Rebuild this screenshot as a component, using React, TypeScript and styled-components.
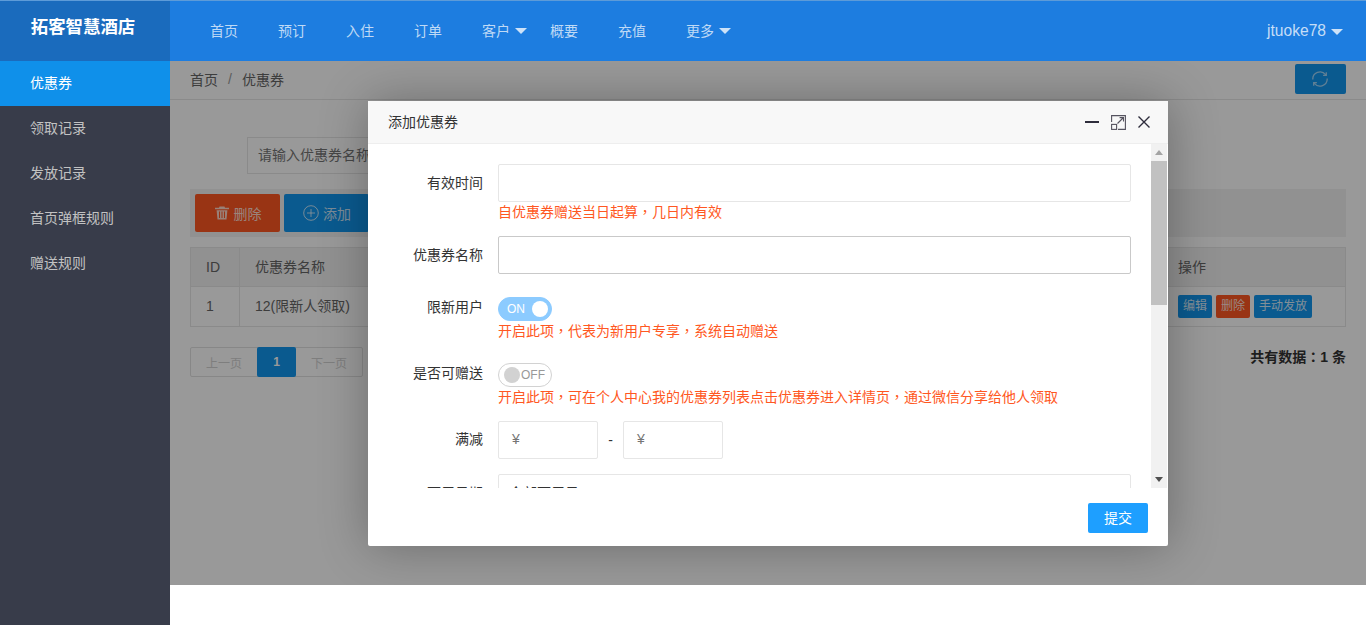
import React from "react";
import styled, { createGlobalStyle } from "styled-components";

const FONT = `"Liberation Sans", "Noto Sans CJK SC", sans-serif`;

const Global = createGlobalStyle`
  html, body { margin: 0; padding: 0; background: #fff; }
  body { font-family: ${FONT}; font-size: 14px; color: #333; overflow: hidden; }
  * { box-sizing: border-box; }
`;

const Shell = styled.div`
  display: grid;
  grid-template-columns: 170px 1fr;
  grid-template-rows: 61px 1fr;
  width: 1366px;
  height: 625px;
  overflow: hidden;
`;

const Logo = styled.div`
  background: #1a6bbd;
  border-top: 1px solid #5d9bd8;
  color: #fff;
  font-size: 17.4px;
  font-weight: 700;
  display: flex;
  align-items: center;
  justify-content: center;
  padding: 0 4px 11px 0;
`;

const TopNav = styled.nav`
  background: #1d7de0;
  border-top: 1px solid #5d9bd8;
  display: flex;
  align-items: center;
  padding: 0 23px 2px 20px;
`;

const NavItem = styled.a`
  color: rgba(255, 255, 255, 0.72);
  font-size: 14px;
  width: 68px;
  padding-left: 20px;
  display: flex;
  align-items: center;
  white-space: nowrap;
`;

const Caret = styled.i`
  display: inline-block;
  width: 0;
  height: 0;
  margin-left: 5px;
  margin-top: 2px;
  border-style: solid;
  border-width: 6px 6px 0;
  border-color: rgba(255, 255, 255, 0.78) transparent transparent;
`;

const User = styled.div`
  margin-left: auto;
  display: flex;
  align-items: center;
  color: rgba(255, 255, 255, 0.75);
  font-size: 15.6px;
  padding-top: 2px;
`;

const Sidebar = styled.aside`
  background: #383c4a;
`;

const SideItem = styled.div<{ $active?: boolean }>`
  height: 45px;
  line-height: 45px;
  padding-left: 30px;
  font-size: 14px;
  color: ${(p) => (p.$active ? "#fff" : "#c2c2c2")};
  background: ${(p) => (p.$active ? "#0f90ea" : "transparent")};
`;

const Main = styled.main`
  display: flex;
  flex-direction: column;
`;

const Frame = styled.div`
  position: relative;
  height: 524px;
  background: #fff;
  overflow: hidden;
`;

const Crumbs = styled.div`
  height: 39px;
  border-bottom: 1px solid #e6e6e6;
  background: #fff;
  display: flex;
  align-items: center;
  padding: 0 20px 3px;
  color: #666;
  font-size: 14px;
`;

const Slash = styled.span`
  margin: 0 10px;
  color: #999;
`;

const RefreshButton = styled.div`
  margin-left: auto;
  width: 51px;
  height: 30px;
  border-radius: 2px;
  background: #1296ee;
  display: flex;
  align-items: center;
  justify-content: center;
  padding-right: 2px;
`;

const Page = styled.div`
  display: flex;
  flex-direction: column;
  padding: 37px 20px 0;
`;

const Search = styled.div`
  margin-left: 57px;
  width: 300px;
  height: 37px;
  border: 1px solid #e6e6e6;
  line-height: 35px;
  padding-left: 10px;
  color: #757575;
  font-size: 14px;
`;

const Toolbar = styled.div`
  margin-top: 15px;
  height: 48px;
  background: #f2f2f2;
  padding: 5px;
  display: flex;
  gap: 4px;
`;

const ToolButton = styled.div<{ $color: string }>`
  width: 85px;
  height: 38px;
  border-radius: 2px;
  background: ${(p) => p.$color};
  color: rgba(255, 255, 255, 0.8);
  display: flex;
  align-items: center;
  justify-content: center;
  gap: 4px;
  font-size: 14px;
  padding-bottom: 1px;
`;

const AddButton = styled(ToolButton)`
  padding-left: 1px;
`;

const Table = styled.div`
  margin-top: 10px;
  border: 1px solid #e6e6e6;
  display: grid;
  grid-template-columns: 48px 1fr 182px;
`;

const HeadCell = styled.div`
  height: 39px;
  line-height: 39px;
  padding-left: 15px;
  background: #f2f2f2;
  border-bottom: 1px solid #e6e6e6;
  color: #666;
  & + & { border-left: 1px solid #e6e6e6; }
`;

const ActionHead = styled(HeadCell)`
  padding-left: 14px;
`;

const BodyCell = styled.div`
  height: 39px;
  line-height: 39px;
  padding-left: 15px;
  color: #666;
  display: flex;
  align-items: center;
  & + & { border-left: 1px solid #e6e6e6; }
`;

const ActionCell = styled(BodyCell)`
  gap: 4px;
  padding-left: 14px;
`;

const MiniButton = styled.span<{ $color: string }>`
  height: 23px;
  padding: 0 5px;
  line-height: 23px;
  border-radius: 2px;
  font-size: 12px;
  background: ${(p) => p.$color};
  color: rgba(255, 255, 255, 0.85);
`;

const Footer = styled.div`
  margin-top: 20px;
  display: flex;
  justify-content: space-between;
  align-items: flex-start;
`;

const Pager = styled.div`
  display: flex;
  width: 173px;
  height: 30px;
  border: 1px solid #e2e2e2;
  border-radius: 2px;
  font-size: 12px;
  color: #d2d2d2;
`;

const PagerItem = styled.span<{ $current?: boolean }>`
  display: flex;
  align-items: center;
  justify-content: center;
  flex: ${(p) => (p.$current ? "0 0 39px" : "1")};
  margin: ${(p) => (p.$current ? "-1px 0" : "0")};
  background: ${(p) => (p.$current ? "#1296ee" : "transparent")};
  color: ${(p) => (p.$current ? "#fff" : "inherit")};
  font-weight: ${(p) => (p.$current ? 700 : 400)};
  border-radius: ${(p) => (p.$current ? "2px" : "0")};
`;

const Total = styled.div`
  font-weight: 700;
  font-size: 14px;
  line-height: 20px;
  height: 20px;
  color: #333;
`;

const Punct = styled.span`
  font-family: "Noto Sans CJK TC", sans-serif;
  line-height: 0;
`;

const Shade = styled.div`
  position: absolute;
  inset: 0;
  background: rgba(0, 0, 0, 0.4);
`;

const Modal = styled.section`
  position: absolute;
  left: 198px;
  top: 40px;
  width: 800px;
  height: 445px;
  background: #fff;
  border-radius: 2px;
  box-shadow: 1px 1px 50px rgba(0, 0, 0, 0.3);
  display: flex;
  flex-direction: column;
`;

const ModalTitle = styled.header`
  height: 43px;
  flex: none;
  background: #f8f8f8;
  border-bottom: 1px solid #eee;
  display: flex;
  align-items: center;
  padding: 0 16px 3px 20px;
  font-size: 14px;
  color: #333;
`;

const TitleIcons = styled.div`
  margin-left: auto;
  display: flex;
  align-items: center;
  gap: 12px;
  padding-top: 3px;
`;

const ModalBody = styled.div`
  height: 344px;
  flex: none;
  display: flex;
  padding-right: 1px;
`;

const FormArea = styled.div`
  flex: 1;
  overflow: hidden;
  padding: 20px 20px 0 0;
  display: flex;
  flex-direction: column;
`;

const Scrollbar = styled.div`
  width: 16px;
  background: #f1f1f1;
  display: flex;
  flex-direction: column;
`;

const ScrollArrow = styled.div`
  height: 17px;
  flex: none;
  display: flex;
  align-items: center;
  justify-content: center;
`;

const ScrollTrack = styled.div`
  flex: 1;
`;

const ScrollThumb = styled.div`
  height: 144px;
  background: #c1c1c1;
`;

const Field = styled.div<{ $gap?: number }>`
  display: flex;
  margin-bottom: ${(p) => p.$gap ?? 0}px;
  flex: none;
`;

const Label = styled.label<{ $top?: number }>`
  width: 115px;
  flex: none;
  text-align: right;
  color: #333;
  font-size: 14px;
  line-height: 20px;
  padding-top: ${(p) => p.$top ?? 9}px;
`;

const Control = styled.div`
  margin-left: 15px;
  flex: 1;
`;

const TextInput = styled.div<{ $focus?: boolean }>`
  height: 38px;
  border: 1px solid ${(p) => (p.$focus ? "#c9c9c9" : "#e6e6e6")};
  border-radius: 2px;
  background: #fff;
  line-height: 36px;
  padding-left: 10px;
  color: #333;
`;

const Hint = styled.div`
  color: #ff5722;
  font-size: 14px;
  line-height: 20px;
  height: 20px;
`;

const Switch = styled.div<{ $on?: boolean }>`
  width: 54px;
  height: 24px;
  border-radius: 20px;
  border: 1px solid ${(p) => (p.$on ? "#8ccbff" : "#d2d2d2")};
  background: ${(p) => (p.$on ? "#8ccbff" : "#fff")};
  color: ${(p) => (p.$on ? "#fff" : "#999")};
  font-size: 12px;
  display: flex;
  flex-direction: ${(p) => (p.$on ? "row" : "row-reverse")};
  align-items: center;
  justify-content: space-between;
  padding: ${(p) => (p.$on ? "0 3px 0 8px" : "0 6px 0 5px")};
`;

const Knob = styled.i<{ $on?: boolean }>`
  width: 16px;
  height: 16px;
  border-radius: 50%;
  background: ${(p) => (p.$on ? "#fff" : "#d2d2d2")};
`;

const Range = styled.div`
  display: flex;
  align-items: center;
`;

const Money = styled.div`
  width: 100px;
  height: 38px;
  border: 1px solid #e6e6e6;
  border-radius: 2px;
  line-height: 34px;
  padding-left: 13px;
  color: #757575;
`;

const Dash = styled.span`
  width: 25px;
  text-align: center;
`;

const ModalFooter = styled.footer`
  flex: 1;
  display: flex;
  justify-content: flex-end;
  align-items: flex-start;
  padding: 15px 20px 0 0;
`;

const Submit = styled.div`
  width: 60px;
  height: 30px;
  line-height: 30px;
  background: #1e9fff;
  color: #fff;
  text-align: center;
  border-radius: 2px;
  font-size: 14px;
`;

const Dropdown = () => <Caret />;

const App: React.FC = () => (
  <Shell>
    <Global />
    <Logo>拓客智慧酒店</Logo>
    <TopNav>
      {["首页", "预订", "入住", "订单"].map((t) => (
        <NavItem key={t}>{t}</NavItem>
      ))}
      <NavItem>
        客户
        <Dropdown />
      </NavItem>
      {["概要", "充值"].map((t) => (
        <NavItem key={t}>{t}</NavItem>
      ))}
      <NavItem>
        更多
        <Dropdown />
      </NavItem>
      <User>
        jtuoke78
        <Dropdown />
      </User>
    </TopNav>
    <Sidebar>
      <SideItem $active>优惠券</SideItem>
      <SideItem>领取记录</SideItem>
      <SideItem>发放记录</SideItem>
      <SideItem>首页弹框规则</SideItem>
      <SideItem>赠送规则</SideItem>
    </Sidebar>
    <Main>
      <Frame>
        <Crumbs>
          首页
          <Slash>/</Slash>
          优惠券
          <RefreshButton>
            <svg width="18" height="18" viewBox="0 0 18 18" fill="none" stroke="rgba(255,255,255,.6)" strokeWidth="1.3">
              <path d="M1.8 9.5A7.2 7.2 0 0 1 14.6 4.6" />
              <path d="M16.2 8.5A7.2 7.2 0 0 1 3.4 13.4" />
              <path d="M15.3 2.2v3.2h-3.2" />
              <path d="M2.7 15.8v-3.2h3.2" />
            </svg>
          </RefreshButton>
        </Crumbs>
        <Page>
          <Search>请输入优惠券名称</Search>
          <Toolbar>
            <ToolButton $color="#ff5722">
              <svg width="16" height="16" viewBox="0 0 16 16" fill="rgba(255,255,255,.75)">
                <path d="M5.5 1.5h5l.5 1.3H15v1.4H1V2.8h4zM2.6 5.2h10.8l-.9 9.3H3.5zM5 6.5v6.5h1V6.5zm2.5 0v6.5h1V6.5zm2.5 0v6.5h1V6.5z" />
              </svg>
              删除
            </ToolButton>
            <AddButton $color="#1296ee">
              <svg width="16" height="16" viewBox="0 0 16 16" fill="none" stroke="rgba(255,255,255,.75)" strokeWidth="1">
                <circle cx="8" cy="8" r="7.3" />
                <path d="M8 4v8M4 8h8" />
              </svg>
              添加
            </AddButton>
          </Toolbar>
          <Table>
            <HeadCell>ID</HeadCell>
            <HeadCell>优惠券名称</HeadCell>
            <ActionHead>操作</ActionHead>
            <BodyCell>1</BodyCell>
            <BodyCell>12(限新人领取)</BodyCell>
            <ActionCell>
              <MiniButton $color="#1296ee">编辑</MiniButton>
              <MiniButton $color="#ff5722">删除</MiniButton>
              <MiniButton $color="#1296ee">手动发放</MiniButton>
            </ActionCell>
          </Table>
          <Footer>
            <Pager>
              <PagerItem>上一页</PagerItem>
              <PagerItem $current>1</PagerItem>
              <PagerItem>下一页</PagerItem>
            </Pager>
            <Total>
              共有数据<Punct>：</Punct>1 条
            </Total>
          </Footer>
        </Page>
        <Shade />
        <Modal>
          <ModalTitle>
            添加优惠券
            <TitleIcons>
              <svg width="14" height="4" viewBox="0 0 14 4">
                <rect x="0" y="1" width="14" height="2" fill="#2e2d3c" />
              </svg>
              <svg width="15" height="15" viewBox="0 0 15 15" fill="none" stroke="#55535f" strokeWidth="1.1">
                <path d="M.6 7V.6h13.8v13.8H7" />
                <rect x=".6" y="9.4" width="5" height="5" />
                <path d="M6.5 8.5l6-6M8.6 2.6h3.9v3.9" />
              </svg>
              <svg width="14" height="14" viewBox="0 0 14 14" fill="none" stroke="#2e2d3c" strokeWidth="1.4">
                <path d="M.5 1.5l11 11M11.5 1.5l-11 11" />
              </svg>
            </TitleIcons>
          </ModalTitle>
          <ModalBody>
            <FormArea>
              <Field $gap={14}>
                <Label>有效时间</Label>
                <Control>
                  <TextInput />
                  <Hint>
                    自优惠券赠送当日起算<Punct>，</Punct>几日内有效
                  </Hint>
                </Control>
              </Field>
              <Field $gap={23}>
                <Label>优惠券名称</Label>
                <Control>
                  <TextInput $focus />
                </Control>
              </Field>
              <Field $gap={22}>
                <Label $top={0}>限新用户</Label>
                <Control>
                  <Switch $on>
                    ON
                    <Knob $on />
                  </Switch>
                  <Hint>
                    开启此项<Punct>，</Punct>代表为新用户专享<Punct>，</Punct>系统自动赠送
                  </Hint>
                </Control>
              </Field>
              <Field $gap={14}>
                <Label $top={0}>是否可赠送</Label>
                <Control>
                  <Switch>
                    OFF
                    <Knob />
                  </Switch>
                  <Hint>
                    开启此项<Punct>，</Punct>可在个人中心我的优惠券列表点击优惠券进入详情页<Punct>，</Punct>通过微信分享给他人领取
                  </Hint>
                </Control>
              </Field>
              <Field $gap={15}>
                <Label $top={8}>满减</Label>
                <Control>
                  <Range>
                    <Money>¥</Money>
                    <Dash>-</Dash>
                    <Money>¥</Money>
                  </Range>
                </Control>
              </Field>
              <Field>
                <Label>可用日期</Label>
                <Control>
                  <TextInput>全部可用日</TextInput>
                </Control>
              </Field>
            </FormArea>
            <Scrollbar>
              <ScrollArrow>
                <svg width="8" height="5" viewBox="0 0 8 5"><path d="M4 0l4 5H0z" fill="#a3a3a3" /></svg>
              </ScrollArrow>
              <ScrollThumb />
              <ScrollTrack />
              <ScrollArrow>
                <svg width="8" height="5" viewBox="0 0 8 5"><path d="M0 0h8L4 5z" fill="#505050" /></svg>
              </ScrollArrow>
            </Scrollbar>
          </ModalBody>
          <ModalFooter>
            <Submit>提交</Submit>
          </ModalFooter>
        </Modal>
      </Frame>
    </Main>
  </Shell>
);

export default App;
